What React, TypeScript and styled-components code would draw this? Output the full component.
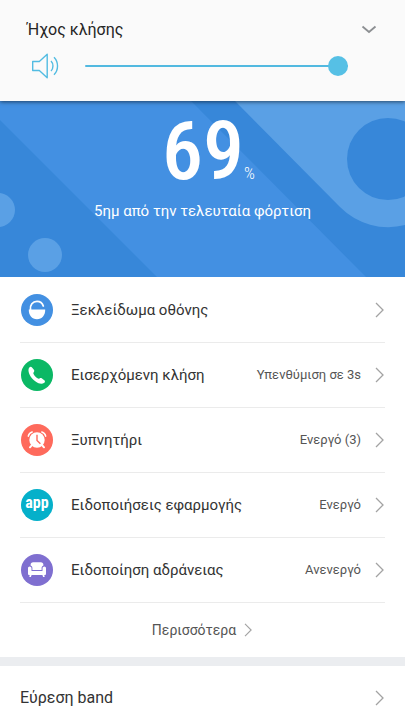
import React from "react";
import styled, { createGlobalStyle } from "styled-components";

const GlobalStyle = createGlobalStyle`
  *, *::before, *::after { box-sizing: border-box; }
  body {
    margin: 0;
    background: #fff;
    color: #333;
    font-family: Roboto, "Noto Sans", sans-serif;
  }
  button { font: inherit; color: inherit; border: 0; background: none; padding: 0; cursor: pointer; }
`;

const Page = styled.main`
  display: flex;
  flex-direction: column;
  min-height: 100vh;
`;

const VolumePanel = styled.section`
  position: relative;
  z-index: 1;
  padding: 18px 28px 22px 27px;
  background: #fafafa;
  box-shadow: 0 1px 4px rgba(0, 0, 0, 0.55);
`;

const VolumeHeader = styled.div`
  display: flex;
  align-items: center;
  justify-content: space-between;
  height: 24px;
`;

const VolumeLabel = styled.label`
  font-size: 16px;
  line-height: 24px;
  color: #252525;
`;

const CollapseButton = styled.button`
  display: flex;
  svg { display: block; }
`;

const VolumeRow = styled.div`
  display: flex;
  align-items: center;
  gap: 24px;
  padding: 10px 29px 0 4px;

  svg { flex: none; display: block; }
`;

const Slider = styled.input`
  appearance: none;
  flex: 1;
  min-width: 0;
  height: 20px;
  margin: 0;
  background: transparent;

  &::-webkit-slider-runnable-track {
    height: 2px;
    border-radius: 1px;
    background: #52b9e0;
  }
  &::-webkit-slider-thumb {
    appearance: none;
    width: 20px;
    height: 20px;
    margin-top: -9px;
    border-radius: 50%;
    background: #56c0e5;
  }
`;

const Hero = styled.section`
  position: relative;
  display: flex;
  flex-direction: column;
  align-items: center;
  height: 176px;
  padding-top: 12px;
  overflow: hidden;
  background: #4390e2;
  color: #fff;
`;

const HeroArt = styled.svg`
  position: absolute;
  inset: 0;
  width: 100%;
  height: 100%;
`;

const Charge = styled.p`
  position: relative;
  display: flex;
  align-items: baseline;
  margin: 0;
  padding-left: 12px;
  font-family: "Roboto Condensed", "Liberation Sans Narrow", sans-serif;
`;

const ChargeValue = styled.span`
  font-size: 82px;
  font-weight: 500;
  line-height: 76px;
`;

const ChargeUnit = styled.span`
  font-size: 17px;
  font-weight: 300;
  line-height: 20px;
`;

const HeroNote = styled.p`
  position: relative;
  margin: 10px 0 0;
  font-size: 15px;
  line-height: 24px;
`;

const List = styled.ul`
  margin: 0;
  padding: 1px 20px 0;
  list-style: none;
`;

const Item = styled.li`
  border-bottom: 1px solid #ebebeb;
`;

const RowButton = styled.button`
  display: flex;
  align-items: center;
  width: 100%;
  height: 64px;
  text-align: left;
`;

const Badge = styled.span<{ $color: string }>`
  display: flex;
  align-items: center;
  justify-content: center;
  flex: none;
  width: 32px;
  height: 32px;
  margin: 0 18px 0 1px;
  border-radius: 50%;
  background: ${(p) => p.$color};
  color: #fff;
`;

const AppWord = styled.span`
  font-family: "Roboto Condensed", "Liberation Sans Narrow", sans-serif;
  font-size: 16px;
  font-weight: 700;
  line-height: 20px;
  padding-bottom: 4px;
`;

const RowLabel = styled.span<{ $large?: boolean }>`
  flex: 1;
  font-size: ${(p) => (p.$large ? 16 : 15)}px;
  line-height: 24px;
  white-space: nowrap;
`;

const RowValue = styled.span`
  margin-right: 14px;
  font-size: 13px;
  line-height: 20px;
  color: #555;
  white-space: nowrap;
`;

const MoreButton = styled.button`
  display: flex;
  align-items: center;
  justify-content: center;
  gap: 8px;
  width: 100%;
  height: 54px;
  font-size: 14px;
  line-height: 20px;
  color: #555;
`;

const Separator = styled.div`
  height: 9px;
  background: #ebedf0;
`;

const FindButton = styled.button`
  display: flex;
  align-items: center;
  padding: 20px 20px 10px;
  text-align: left;
`;

const ChevronSvg = styled.svg`
  flex: none;
  display: block;
`;

const Chevron = ({ small = false }: { small?: boolean }) => (
  <ChevronSvg width={small ? 9 : 10} height={small ? 14 : 16} viewBox="0 0 10 16" aria-hidden="true">
    <path d="M1 1l7 7-7 7" fill="none" stroke="#a3a3a3" strokeWidth="1.3" />
  </ChevronSvg>
);

const UnlockIcon = () => (
  <svg width="32" height="32" viewBox="0 0 32 32" aria-hidden="true">
    <path d="M7.800 15.400h16.400c.2 5.600-3.200 9.800-8.200 9.800s-8.400-4.200-8.200-9.800z" fill="#fff" />
    <path d="M9.500 15.800c-.8-5 2.300-8.400 6.500-8.400 3 0 5.400 1.700 6.300 4.600" fill="none" stroke="#fff" strokeWidth="1.800" strokeLinecap="round" />
  </svg>
);

const PhoneIcon = () => (
  <svg width="32" height="32" viewBox="0 0 32 32" aria-hidden="true">
    <path
      d="M8.300 8.500c.8-.9 2-1 2.700-.1l1.900 2.400c.6.800.4 1.700-.2 2.500-.5.700-.4 1.300 0 2 .9 1.600 2.200 3 3.800 4 .7.500 1.300.500 2 .1.900-.500 1.700-.500 2.500.1l2.300 1.700c.9.700.9 1.800 0 2.500-2.200 1.800-5.300 1.300-8.700-1.100-2.700-1.900-5-4.700-6.300-7.700-1-2.600-1.200-4.900 0-6.400z"
      fill="#fff"
    />
  </svg>
);

const AlarmIcon = () => (
  <svg width="32" height="32" viewBox="0 0 32 32" aria-hidden="true">
    <circle cx="16" cy="16" r="7.700" fill="#fff" />
    <path d="M7.300 12.200c.4-2 1.800-3.600 3.900-4.200M24.700 12.200c-.4-2-1.800-3.600-3.900-4.200" fill="none" stroke="#fff" strokeWidth="1.500" strokeLinecap="round" />
    <path d="M10.700 21.300 9 23.300M21.300 21.300l1.700 2" stroke="#fff" strokeWidth="2" strokeLinecap="round" />
    <path d="M16 10.800v5.600l3.400 3.400" fill="none" stroke="#fe6a5c" strokeWidth="1.400" />
  </svg>
);

const SofaIcon = () => (
  <svg width="32" height="32" viewBox="0 0 32 32" aria-hidden="true">
    <path d="M9.600 11.600v-.8c0-1.600 1-2.500 2.500-2.500h7.800c1.500 0 2.500.9 2.500 2.500v.8c-1.200.5-1.800 1.400-1.800 2.600v1.900h-9.200v-1.900c0-1.200-.6-2.100-1.800-2.600z" fill="#fff" />
    <path d="M7 14.300c0-1.100.7-1.800 1.700-1.800s1.800.7 1.800 1.900v2.700h11v-2.700c0-1.200.8-1.900 1.800-1.900s1.700.7 1.700 1.800v5.400c0 .9-.5 1.400-1.300 1.400h-.4l.4 1.800h-1.600l-.7-1.800h-10.800l-.7 1.800H8.300l.4-1.800h-.4c-.8 0-1.300-.5-1.300-1.400z" fill="#fff" />
  </svg>
);

type Entry = { label: string; value?: string; color: string; icon: React.ReactNode };

const entries: Entry[] = [
  { label: "Ξεκλείδωμα οθόνης", color: "#4390e2", icon: <UnlockIcon /> },
  { label: "Εισερχόμενη κλήση", value: "Υπενθύμιση σε 3s", color: "#0bb865", icon: <PhoneIcon /> },
  { label: "Ξυπνητήρι", value: "Ενεργό (3)", color: "#fe6a5c", icon: <AlarmIcon /> },
  { label: "Ειδοποιήσεις εφαρμογής", value: "Ενεργό", color: "#05b0ca", icon: <AppWord>app</AppWord> },
  { label: "Ειδοποίηση αδράνειας", value: "Ανενεργό", color: "#7f6fd0", icon: <SofaIcon /> },
];

export default function App() {
  return (
    <>
      <GlobalStyle />
      <Page>
        <VolumePanel>
          <VolumeHeader>
            <VolumeLabel htmlFor="ringtone-volume">Ήχος κλήσης</VolumeLabel>
            <CollapseButton type="button" aria-expanded="true" aria-controls="ringtone-volume">
              <svg width="16" height="10" viewBox="0 0 16 10" aria-hidden="true">
                <path d="m1.500 1.500 6.500 5.500 6.500-5.500" fill="none" stroke="#8c8f92" strokeWidth="1.800" />
              </svg>
            </CollapseButton>
          </VolumeHeader>
          <VolumeRow>
            <svg width="30" height="27" viewBox="0 0 30 27" aria-hidden="true">
              <g fill="none" stroke="#52bce2" strokeWidth="1.400" strokeLinejoin="round">
                <path d="M1.700 9.500h6.600l7.900-7.200v23.400l-7.900-7.200H1.700z" />
                <path d="M20 9c2.600 2.600 2.600 7.400 0 10M23 5.200c4.700 4.800 4.700 12.800 0 17.600" />
              </g>
            </svg>
            <Slider id="ringtone-volume" type="range" min="0" max="15" defaultValue="15" />
          </VolumeRow>
        </VolumePanel>

        <Hero>
          <HeroArt viewBox="0 0 405 176" preserveAspectRatio="xMidYMid slice" aria-hidden="true">
            <path d="M0 19v157h157z" fill="#3787d9" />
            <path d="M191 0h214v176h-39z" fill="#3787d9" />
            <path d="M235 0l105 106a68 68 0 0 0 65 18V0z" fill="#5aa0e5" />
            <circle cx="388" cy="58" r="41" fill="#3787d9" />
            <circle cx="-2" cy="109" r="17" fill="#5aa0e5" />
            <circle cx="45" cy="154" r="17" fill="#5aa0e5" />
          </HeroArt>
          <Charge>
            <ChargeValue>69</ChargeValue>
            <ChargeUnit>%</ChargeUnit>
          </Charge>
          <HeroNote>5ημ από την τελευταία φόρτιση</HeroNote>
        </Hero>

        <List>
          {entries.map((entry) => (
            <Item key={entry.label}>
              <RowButton type="button">
                <Badge $color={entry.color}>{entry.icon}</Badge>
                <RowLabel>{entry.label}</RowLabel>
                {entry.value && <RowValue>{entry.value}</RowValue>}
                <Chevron />
              </RowButton>
            </Item>
          ))}
        </List>
        <MoreButton type="button">
          Περισσότερα
          <Chevron small />
        </MoreButton>
        <Separator />
        <FindButton type="button">
          <RowLabel $large>Εύρεση band</RowLabel>
          <Chevron />
        </FindButton>
      </Page>
    </>
  );
}
